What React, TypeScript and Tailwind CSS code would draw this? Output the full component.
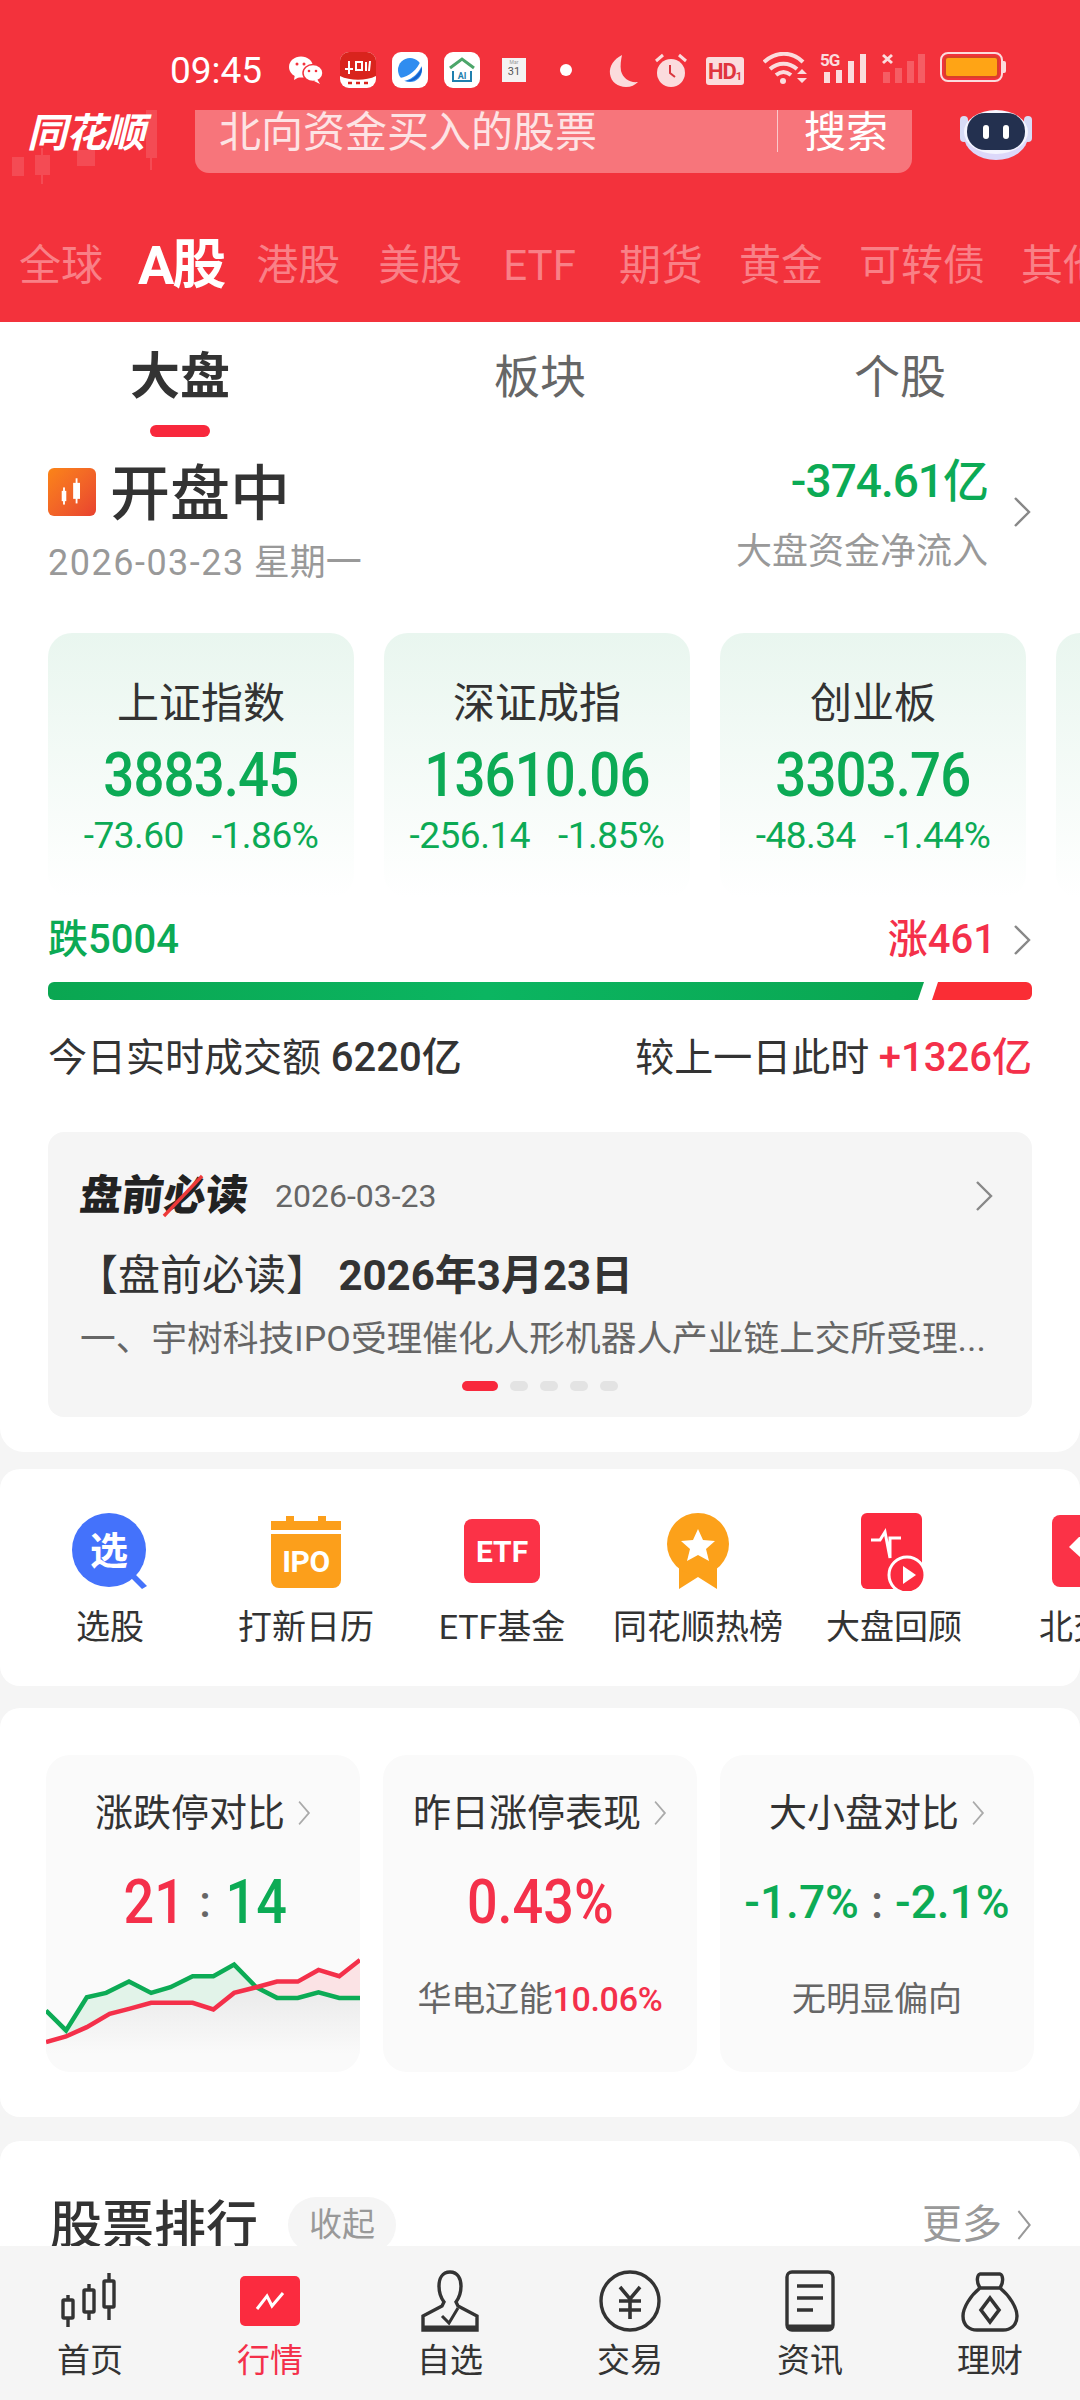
import type { ReactNode } from "react";

const FONT = "font-['Roboto','Noto_Sans_CJK_SC',sans-serif]";

const Chevron = ({ className = "" }: { className?: string }) => (
  <svg viewBox="0 0 20 32" fill="none" stroke="currentColor" strokeWidth="2.4" preserveAspectRatio="none" className={className}>
    <polyline points="3,2 17,16 3,30" />
  </svg>
);

const StatusBar = () => (
  <div className="h-[110px] shrink-0 flex items-start pt-[52px] pl-[170px]">
    <span className="text-[37px] leading-[37px] text-white w-[119px]">09:45</span>
    {/* wechat */}
    <svg viewBox="0 0 34 28" className="w-[34px] h-[28px] mt-[4px] mr-[17px]" fill="#fff">
      <ellipse cx="12" cy="11" rx="12" ry="10.5" />
      <path d="M6 18l-1 6 7-4z" />
      <ellipse cx="24" cy="17" rx="10" ry="8.5" fill="#fff" stroke="#f3323c" strokeWidth="1.5" />
      <path d="M28 23l3 5-6-3z" />
      <circle cx="8" cy="8" r="1.5" fill="#f3323c" />
      <circle cx="15" cy="8" r="1.5" fill="#f3323c" />
      <circle cx="20" cy="15" r="1.3" fill="#f3323c" />
      <circle cx="27" cy="15" r="1.3" fill="#f3323c" />
    </svg>
    {/* red app */}
    <svg viewBox="0 0 36 36" className="w-[36px] h-[36px] mr-[16px]">
      <rect width="36" height="36" rx="9" fill="#fff" />
      <path d="M0 9a9 9 0 0 1 9-9h18a9 9 0 0 1 9 9v15c-10 5-26 5-36 0z" fill="#d9241d" />
      <path d="M5 17h8M9 9v13M16 10h6v8h-6zM26 10v9M30 9l-1 10" stroke="#fff" strokeWidth="2" fill="none" />
      <path d="M8 31h4M16 31h4M24 31h4" stroke="#d9241d" strokeWidth="2.5" />
    </svg>
    {/* planet */}
    <div className="w-[36px] h-[36px] rounded-[9px] bg-white flex items-center justify-center mr-[16px]">
      <svg viewBox="0 0 30 30" className="w-[30px] h-[30px]">
        <circle cx="15" cy="15" r="12" fill="#2f8df0" />
        <path d="M5 23C14 22 23 14 26 5l2 2c-2 9-11 19-21 19z" fill="#fff" />
        <path d="M11 26c7-1 13-7 16-14 1 8-7 16-16 14z" fill="#1660c9" />
      </svg>
    </div>
    {/* ai home */}
    <div className="w-[36px] h-[36px] rounded-[9px] bg-white flex items-center justify-center mr-[22px]">
      <svg viewBox="0 0 30 30" className="w-[30px] h-[30px]" fill="none">
        <path d="M3 13 15 4l12 9" stroke="#4ca66a" strokeWidth="3" />
        <path d="M6 16v10h18V16" stroke="#1f7fae" strokeWidth="2" />
        <text x="15" y="24" textAnchor="middle" fontSize="9" fontWeight="700" fill="#1f7fae">AI</text>
      </svg>
    </div>
    {/* calendar */}
    <div className="w-[24px] h-[24px] mt-[6px] bg-[#f4f2f2] flex flex-col items-center mr-[34px]">
      <span className="text-[5px] leading-[8px] text-[#999]">Mar</span>
      <span className="text-[11px] leading-[12px] text-[#555]">31</span>
    </div>
    <span className="w-[12px] h-[12px] rounded-full bg-white mt-[12px] mr-[36px]" />
    {/* moon */}
    <svg viewBox="0 0 30 34" className="w-[30px] h-[34px] mt-[2px] mr-[17px]" fill="#fbdcdd">
      <path d="M14 1C6 5 1 12 2 20c1 8 8 13 16 13 5 0 9-2 12-5-9 1-15-4-17-11-1-6 0-11 1-16z" />
    </svg>
    {/* alarm */}
    <svg viewBox="0 0 32 34" className="w-[32px] h-[34px] mt-[1px] mr-[19px]">
      <circle cx="16" cy="20" r="14" fill="#fbdcdd" />
      <path d="M1 8 8 2M31 8l-7-6" stroke="#fbdcdd" strokeWidth="3" />
      <path d="M15 12v8l5 4" stroke="#d9363e" strokeWidth="2" fill="none" />
    </svg>
    {/* hd */}
    <div className="w-[38px] h-[28px] mt-[5px] rounded-[3px] bg-[#fbdcdd] text-[#e0353d] flex items-end justify-center mr-[19px]">
      <span className="text-[22px] leading-[26px] font-bold tracking-[-1px]">HD</span>
      <span className="text-[11px] leading-[16px] font-bold">1</span>
    </div>
    {/* wifi */}
    <svg viewBox="0 0 44 32" className="w-[44px] h-[32px] mr-[13px]" fill="none" stroke="#fbdcdd" strokeWidth="4">
      <path d="M1 10c12-11 28-11 39 0" />
      <path d="M7 17c8-7 19-7 27 0" />
      <path d="M13 23c5-4 10-4 15 0" />
      <circle cx="20" cy="29" r="3" fill="#fbdcdd" stroke="none" />
      <path d="M34 22l5-5 5 5zM34 26l5 5 5-5z" fill="#fbdcdd" stroke="none" />
    </svg>
    {/* 5g signal */}
    <div className="relative w-[48px] h-[32px] mr-[14px]">
      <span className="absolute left-0 top-0 text-[17px] leading-[17px] font-bold text-[#fbdcdd] tracking-[-1px]">5G</span>
      <svg viewBox="0 0 48 32" className="w-[48px] h-[32px]" fill="#fbdcdd">
        <rect x="4" y="20" width="6" height="11" />
        <rect x="16" y="18" width="6" height="13" />
        <rect x="28" y="9" width="6" height="22" />
        <rect x="40" y="2" width="6" height="29" />
      </svg>
    </div>
    {/* signal x */}
    <svg viewBox="0 0 44 32" className="w-[44px] h-[32px] mr-[14px]">
      <path d="M1 3l9 8M10 3l-9 8" stroke="#fbdcdd" strokeWidth="3" />
      <g fill="#fbdcdd" opacity=".25">
        <rect x="1" y="20" width="7" height="11" />
        <rect x="13" y="16" width="7" height="15" />
        <rect x="25" y="9" width="7" height="22" />
        <rect x="36" y="2" width="7" height="29" />
      </g>
    </svg>
    {/* battery */}
    <div className="flex items-center">
      <div className="w-[63px] h-[30px] rounded-[8px] border-[2px] border-[#fbdcdd] p-[2px]">
        <div className="w-full h-full rounded-[4px] bg-[#ffa415] border-[2px] border-[#d9402a]" />
      </div>
      <span className="w-[3px] h-[12px] bg-[#fbdcdd] rounded-r-[2px]" />
    </div>
  </div>
);

const SearchRow = () => (
  <div className="h-[63px] shrink-0 flex">
    <div className="relative w-[195px] shrink-0">
      <svg viewBox="0 0 170 80" className="absolute left-0 top-0 w-[170px] h-[80px]" fill="#fff" opacity=".12">
        <rect x="12" y="47" width="12" height="19" />
        <rect x="35" y="45" width="15" height="20" />
        <rect x="41" y="38" width="2" height="36" />
        <rect x="77" y="40" width="18" height="16" />
        <rect x="146" y="0" width="11" height="48" />
        <rect x="150" y="48" width="2" height="12" />
      </svg>
      <span className="relative block pl-[27px] pt-[2px] text-[40px] leading-[44px] font-bold italic text-white tracking-[-1px]">同花顺</span>
    </div>
    <div className="w-[717px] h-full bg-[#f7757b] rounded-b-[14px] flex items-start pl-[24px]">
      <span className="text-[42px] leading-[46px] text-[#fde3e4] w-[558px] h-[44px]">北向资金买入的股票</span>
      <span className="w-[1px] h-[42px] bg-[#fbc9cb] mr-[26px]" />
      <span className="text-[42px] leading-[46px] text-white">搜索</span>
    </div>
    <svg viewBox="0 0 72 50" className="ml-[48px] w-[72px] h-[50px]">
      <rect x="0" y="6" width="8" height="26" rx="4" fill="#d8dcf6" />
      <rect x="64" y="6" width="8" height="26" rx="4" fill="#d8dcf6" />
      <ellipse cx="36" cy="26" rx="32" ry="24" fill="#dcd8fa" />
      <ellipse cx="36" cy="22" rx="32" ry="22" fill="#f4f5ff" />
      <rect x="7" y="3" width="58" height="37" rx="18" fill="#23304f" />
      <rect x="23" y="15" width="6" height="14" rx="3" fill="#fff" />
      <rect x="43" y="15" width="6" height="14" rx="3" fill="#fff" />
    </svg>
  </div>
);

const marketTabs = [
  { label: "港股", cls: "" },
  { label: "美股", cls: "ml-[2px]" },
  { label: "ETF", cls: "ml-[5px] mr-[7px]" },
  { label: "期货", cls: "" },
  { label: "黄金", cls: "" },
  { label: "可转债", cls: "" },
  { label: "其他", cls: "" },
];

const MarketTabs = () => (
  <div className="h-[149px] shrink-0 flex items-center gap-[36px] pl-[19px] pt-[36px] overflow-hidden whitespace-nowrap">
    <span className="text-[42px] text-[#f98087]">全球</span>
    <span className="text-[54px] font-bold text-white -ml-[1px] -mr-[4px] tracking-[-2px]">A股</span>
    {marketTabs.map((t) => (
      <span key={t.label} className={`text-[42px] text-[#f98087] ${t.cls}`}>{t.label}</span>
    ))}
  </div>
);

const indices = [
  { name: "上证指数", value: "3883.45", a: "-73.60", b: "-1.86%" },
  { name: "深证成指", value: "13610.06", a: "-256.14", b: "-1.85%" },
  { name: "创业板", value: "3303.76", a: "-48.34", b: "-1.44%" },
];

const IndexCards = () => (
  <div className="flex gap-[30px] mt-[36px] pl-[48px] overflow-hidden">
    {indices.map((c) => (
      <div key={c.name} className="w-[306px] h-[265px] shrink-0 rounded-[24px] bg-linear-to-b from-[#e9f6ef] to-white flex flex-col items-center pt-[43px]">
        <span className="text-[42px] leading-[56px] text-[#333]">{c.name}</span>
        <span className="inline-block scale-x-[0.88] text-[62px] leading-[64px] mt-[11px] font-medium text-[#0caa55] tracking-[-1px]">{c.value}</span>
        <span className="text-[37px] leading-[40px] mt-[9px] text-[#0caa55] flex gap-[28px] whitespace-nowrap tracking-[-0.5px]">
          <span>{c.a}</span>
          <span>{c.b}</span>
        </span>
      </div>
    ))}
    <div className="w-[306px] h-[265px] shrink-0 rounded-[24px] bg-linear-to-b from-[#e9f6ef] to-white" />
  </div>
);

const Overview = () => (
  <section className="bg-white rounded-b-[24px] h-[1130px] shrink-0 overflow-hidden">
    <div className="flex h-[115px] pt-[27px]">
      <div className="w-[360px] flex flex-col items-center">
        <span className="text-[50px] leading-[56px] font-bold text-[#333]">大盘</span>
        <span className="w-[60px] h-[12px] mt-[20px] rounded-full bg-[#f8283c]" />
      </div>
      <div className="w-[360px] text-center text-[46px] leading-[56px] text-[#666]">板块</div>
      <div className="w-[360px] text-center text-[46px] leading-[56px] text-[#666]">个股</div>
    </div>
    <div className="flex justify-between px-[48px] h-[160px]">
      <div className="pt-[27px]">
        <div className="flex items-center h-[62px]">
          <span className="w-[48px] h-[48px] -mt-[6px] rounded-[6px] bg-linear-to-br from-[#fb8416] to-[#e8412f] flex items-center justify-center">
            <svg viewBox="0 0 28 28" className="w-[32px] h-[32px]" fill="#fff">
              <rect x="5" y="13" width="4" height="9" />
              <rect x="6.2" y="10" width="1.6" height="15" />
              <rect x="15" y="6" width="6" height="14" />
              <rect x="17.2" y="2" width="1.6" height="22" />
            </svg>
          </span>
          <span className="text-[60px] leading-[62px] ml-[14px] text-[#333] font-medium">开盘中</span>
        </div>
        <div className="text-[36px] leading-[40px] mt-[17px] text-[#999] whitespace-nowrap">
          <span className="tracking-[1.5px]">2026-03-23</span> 星期一
        </div>
      </div>
      <div className="flex items-start">
        <div className="text-right pt-[19px]">
          <div className="text-[46px] leading-[50px] font-medium text-[#0caa55] tracking-[-1px]">-374.61亿</div>
          <div className="text-[36px] leading-[40px] mt-[26px] text-[#999]">大盘资金净流入</div>
        </div>
        <Chevron className="w-[20px] h-[32px] ml-[24px] mt-[59px] text-[#888]" />
      </div>
    </div>
    <IndexCards />
    <div className="flex justify-between items-center px-[48px] h-[44px] mt-[20px]">
      <span className="text-[40px] font-medium text-[#0caa55]">跌5004</span>
      <span className="flex items-center text-[40px] font-medium text-[#f4304a]">
        涨461
        <Chevron className="w-[20px] h-[32px] ml-[16px] text-[#888]" />
      </span>
    </div>
    <div className="flex mx-[48px] h-[18px] mt-[20px] gap-[8px] overflow-hidden rounded-[6px]">
      <div className="flex-1 bg-linear-to-r from-[#0aa651] via-[#0bb561] to-[#0aa651] [clip-path:polygon(0_0,100%_0,99.3%_100%,0_100%)]" />
      <div className="w-[100px] bg-[#fa2d35] [clip-path:polygon(6%_0,100%_0,100%_100%,0_100%)]" />
    </div>
    <div className="flex justify-between items-center px-[48px] h-[50px] mt-[33px] text-[39px]">
      <span className="text-[#333]">今日实时成交额 <span className="font-medium text-[40px]">6220亿</span></span>
      <span className="text-[#333]">较上一日此时 <span className="font-medium text-[40px] text-[#f4304a]">+1326亿</span></span>
    </div>
    <ReadCard />
  </section>
);

const dots = [0, 1, 2, 3];

const ReadCard = () => (
  <div className="mx-[48px] mt-[49px] h-[285px] rounded-[16px] bg-[#f5f5f5] px-[32px] pt-[40px] flex flex-col">
    <div className="flex items-center h-[48px]">
      <span className="relative text-[42px] leading-[48px] font-black text-[#222] -skew-x-6">
        盘前必读
        <svg viewBox="0 0 40 46" className="absolute left-[84px] top-0 w-[40px] h-[46px]" fill="none" stroke="#ee3a3a" strokeWidth="3.5">
          <path d="M2 44 36 4" />
        </svg>
      </span>
      <span className="ml-[27px] text-[32px] text-[#666]">2026-03-23</span>
      <Chevron className="w-[20px] h-[32px] ml-auto mr-[6px] text-[#888]" />
    </div>
    <div className="mt-[31px] text-[42px] leading-[50px] text-[#333] -ml-[4px] whitespace-nowrap">
      【盘前必读】 <span className="font-bold">2026年3月23日</span>
    </div>
    <div className="mt-[15px] text-[35.7px] leading-[46px] text-[#666] whitespace-nowrap">一、宇树科技IPO受理催化人形机器人产业链上交所受理...</div>
    <div className="flex justify-center gap-[12px] mt-[19px]">
      <span className="w-[36px] h-[10px] rounded-full bg-[#f8283c]" />
      {dots.map((d) => (
        <span key={d} className="w-[18px] h-[10px] rounded-full bg-[#e3e3e3]" />
      ))}
    </div>
  </div>
);

const tools: { label: string; icon: ReactNode }[] = [
  {
    label: "选股",
    icon: (
      <div className="relative w-[76px] h-[76px]">
        <svg viewBox="0 0 76 76" className="absolute inset-0"><circle cx="37" cy="37" r="37" fill="#4472fb" /><path d="M60 58l15 15-5 3-14-14z" fill="#4472fb" /></svg>
        <span className="absolute inset-0 flex items-center justify-center text-[38px] font-bold text-white pr-[2px]">选</span>
      </div>
    ),
  },
  {
    label: "打新日历",
    icon: (
      <div className="w-[70px] h-[72px] flex flex-col mt-[3px]">
        <svg viewBox="0 0 70 14" className="w-[70px] h-[14px]" fill="#fc9f1b"><rect x="0" y="5" width="70" height="9" /><rect x="15" y="0" width="8" height="8" /><rect x="47" y="0" width="8" height="8" /></svg>
        <div className="mt-[4px] flex-1 bg-[#fc9f1b] rounded-b-[8px] flex items-center justify-center text-[30px] font-bold text-white tracking-[-0.5px]">IPO</div>
      </div>
    ),
  },
  {
    label: "ETF基金",
    icon: (
      <div className="w-[76px] h-[64px] mt-[6px] rounded-[8px] bg-[#fb3247] flex items-center justify-center text-[30px] font-bold text-white">ETF</div>
    ),
  },
  {
    label: "同花顺热榜",
    icon: (
      <svg viewBox="0 0 62 76" className="w-[62px] h-[76px]">
        <path d="M12 50h38v26L31 64 12 76z" fill="#fca11a" />
        <circle cx="31" cy="31" r="31" fill="#fca11a" />
        <path d="M31 16l5 11 12 1-9 8 3 12-11-6-11 6 3-12-9-8 12-1z" fill="#fff" />
      </svg>
    ),
  },
  {
    label: "大盘回顾",
    icon: (
      <svg viewBox="0 0 66 78" className="w-[66px] h-[78px]">
        <rect x="0" y="0" width="61" height="76" rx="6" fill="#fb2b3f" />
        <path d="M10 35h9l5-8 5 26 0-20h11" fill="none" stroke="#fff" strokeWidth="3" transform="translate(0 -8)" />
        <circle cx="46" cy="62" r="18" fill="#fb2b3f" stroke="#fff" strokeWidth="3" />
        <path d="M42 53l13 9-13 9z" fill="#fff" />
      </svg>
    ),
  },
  {
    label: "北交所",
    icon: (
      <div className="w-[76px] h-[72px] mt-[2px] rounded-[8px] bg-[#fb3247] flex items-center pl-[17px]">
        <svg viewBox="0 0 40 28" className="w-[40px] h-[28px]" fill="#fff">
          <path d="M10 0h20l10 10-20 18L0 10z" />
        </svg>
      </div>
    ),
  },
];

const ToolsCard = () => (
  <section className="mt-[17px] h-[217px] shrink-0 rounded-[20px] bg-white flex pl-[12px] pt-[44px] overflow-hidden">
    {tools.map((t) => (
      <div key={t.label} className="w-[196px] shrink-0 flex flex-col items-center">
        <div className="h-[78px]">{t.icon}</div>
        <span className="mt-[14px] text-[34px] leading-[44px] text-[#333] whitespace-nowrap">{t.label}</span>
      </div>
    ))}
  </section>
);

const Spark = () => (
  <svg viewBox="68 760 454 355" preserveAspectRatio="none" className="w-full h-[118px] mt-auto shrink-0">
    <defs>
      <linearGradient id="under" x1="0" y1="0" x2="0" y2="1">
        <stop offset="0" stopColor="#e3e3e3" />
        <stop offset="1" stopColor="#fafafa" />
      </linearGradient>
    </defs>
    <polygon points="68,1025 97,1008 127,980 160,940 188,925 220,907 280,907 310,927 340,877 372,860 402,843 432,843 462,808 492,827 522,778 522,1060 68,1060" fill="url(#under)" />
    <polygon points="68,930 97,990 127,890 155,877 188,843 220,877 248,860 280,827 310,827 340,792 372,860 340,877 310,927 280,907 220,907 188,925 160,940 127,980 97,1008" fill="#e2f3e9" />
    <polygon points="372,860 402,892 432,892 462,875 492,892 522,892 522,778 492,827 462,808 432,843 402,843" fill="#fbe3e5" />
    <polyline points="68,930 97,990 127,890 155,877 188,843 220,877 248,860 280,827 310,827 340,792 372,860 402,892 432,892 462,875 492,892 522,892" fill="none" stroke="#0cab55" strokeWidth="4.5" vectorEffect="non-scaling-stroke" />
    <polyline points="68,1025 97,1008 127,980 160,940 188,925 220,907 280,907 310,927 340,877 372,860 402,843 432,843 462,808 492,827 522,778" fill="none" stroke="#f4304a" strokeWidth="4.5" vectorEffect="non-scaling-stroke" />
  </svg>
);

const StatTitle = ({ children }: { children: ReactNode }) => (
  <div className="flex items-center justify-center h-[48px] text-[38px] leading-[48px] text-[#333] whitespace-nowrap">
    {children}
    <Chevron className="w-[14px] h-[26px] ml-[12px] text-[#aaa]" />
  </div>
);

const StatsCard = () => (
  <section className="mt-[22px] h-[409px] shrink-0 rounded-[20px] bg-white flex gap-[23px] pl-[46px] pt-[47px]">
    <div className="w-[314px] h-[317px] rounded-[24px] bg-[#fafafa] overflow-hidden flex flex-col pt-[34px]">
      <StatTitle>涨跌停对比</StatTitle>
      <div className="mt-[33px] flex justify-center items-center text-[62px] leading-[64px] font-medium gap-[10px] pl-[4px]">
        <span className="inline-block scale-x-[0.87] text-[#f4304a]">21</span>
        <span className="text-[#666] text-[44px] leading-[56px]">:</span>
        <span className="inline-block scale-x-[0.87] text-[#0cab55]">14</span>
      </div>
      <Spark />
    </div>
    <div className="w-[314px] h-[317px] rounded-[24px] bg-[#fafafa] flex flex-col items-center pt-[34px]">
      <StatTitle>昨日涨停表现</StatTitle>
      <div className="mt-[33px] inline-block scale-x-[0.87] text-[62px] leading-[64px] font-medium text-[#f4304a]">0.43%</div>
      <div className="mt-[43px] text-[34px] leading-[44px] text-[#666] whitespace-nowrap tracking-[-0.3px]">
        华电辽能<span className="text-[#f4304a] font-medium">10.06%</span>
      </div>
    </div>
    <div className="w-[314px] h-[317px] rounded-[24px] bg-[#fafafa] flex flex-col items-center pt-[34px]">
      <StatTitle>大小盘对比</StatTitle>
      <div className="mt-[33px] flex items-center text-[46px] leading-[64px] font-medium text-[#0cab55] gap-[12px] whitespace-nowrap">
        -1.7%<span className="text-[#666]">:</span>-2.1%
      </div>
      <div className="mt-[43px] text-[34px] leading-[44px] text-[#666]">无明显偏向</div>
    </div>
  </section>
);

const RankCard = () => (
  <section className="mt-[24px] flex-1 rounded-t-[20px] bg-white flex items-start pl-[50px] pr-[48px] pt-[56px]">
    <span className="text-[52px] leading-[60px] font-medium text-[#333] whitespace-nowrap">股票排行</span>
    <span className="ml-[30px] w-[108px] h-[56px] rounded-full bg-[#f5f5f5] text-[33px] leading-[56px] text-center text-[#999]">收起</span>
    <span className="ml-auto mt-[3px] flex items-center text-[40px] leading-[50px] text-[#999]">
      更多
      <Chevron className="w-[16px] h-[32px] ml-[14px] text-[#999]" />
    </span>
  </section>
);

const S = "#333";

const navItems: { label: string; active?: boolean; icon: ReactNode }[] = [
  {
    label: "首页",
    icon: (
      <svg viewBox="0 0 60 62" fill="none" stroke={S} strokeWidth="3.4" className="w-[60px] h-[62px]">
        <rect x="3" y="30" width="10" height="18" rx="1" /><path d="M8 25v5M8 48v9" />
        <rect x="24" y="20" width="10" height="22" rx="1" /><path d="M29 14v6M29 42v8" />
        <rect x="44" y="11" width="10" height="26" rx="1" /><path d="M49 3v8M49 37v13" />
      </svg>
    ),
  },
  {
    label: "行情",
    active: true,
    icon: (
      <div className="w-[60px] h-[50px] mt-[6px] rounded-[5px] bg-[#fb2b3f] flex items-center justify-center">
        <svg viewBox="0 0 30 20" fill="none" stroke="#fff" strokeWidth="3" className="w-[30px] h-[20px]">
          <path d="M2 18 12 5l5 10L28 2" />
        </svg>
      </div>
    ),
  },
  {
    label: "自选",
    icon: (
      <svg viewBox="0 0 60 62" fill="none" stroke={S} strokeWidth="3.4" className="w-[60px] h-[62px]">
        <path d="M30 2c-8 0-11 7-11 14 0 7 2 12 5 16l-2 4L3 46v14h54V46l-19-10-2-4c3-4 5-9 5-16 0-7-3-14-11-14z" />
        <path d="M22 46l7 7 9-15" strokeWidth="3" />
        <path d="M3 58h54" strokeWidth="5" />
      </svg>
    ),
  },
  {
    label: "交易",
    icon: (
      <svg viewBox="0 0 62 62" fill="none" stroke={S} strokeWidth="3.4" className="w-[62px] h-[62px]">
        <circle cx="31" cy="31" r="29" />
        <path d="M21 17l10 12 10-12M20 31h22M20 40h22M31 29v20" strokeWidth="3.6" />
      </svg>
    ),
  },
  {
    label: "资讯",
    icon: (
      <svg viewBox="0 0 50 62" fill="none" stroke={S} strokeWidth="3.4" className="w-[50px] h-[62px]">
        <rect x="2" y="2" width="46" height="58" rx="5" />
        <path d="M2 57h46" strokeWidth="5" />
        <path d="M12 16h26M12 28h26M12 40h16" strokeWidth="3.6" />
      </svg>
    ),
  },
  {
    label: "理财",
    icon: (
      <svg viewBox="0 0 58 62" fill="none" stroke={S} strokeWidth="3.4" className="w-[58px] h-[62px]">
        <path d="M19 18c-4-6-3-13 0-14h20c3 1 4 8 0 14" />
        <path d="M19 18h20c10 8 17 20 17 28 0 10-7 14-14 14H16C9 60 2 56 2 46c0-8 7-20 17-28z" />
        <path d="M29 28l9 12-9 12-9-12z" strokeWidth="3.6" />
      </svg>
    ),
  },
];

const BottomNav = () => (
  <nav className="h-[154px] shrink-0 bg-[#f5f5f5] flex pt-[24px]">
    {navItems.map((n) => (
      <div key={n.label} className="w-[180px] flex flex-col items-center">
        <div className="h-[64px] flex items-start">{n.icon}</div>
        <span className={`mt-[5px] text-[33px] leading-[44px] ${n.active ? "text-[#f4304a]" : "text-[#333]"}`}>{n.label}</span>
      </div>
    ))}
  </nav>
);

const App = () => (
  <div className={`w-[1080px] h-[2400px] bg-[#f5f5f5] flex flex-col overflow-hidden ${FONT}`}>
    <header className="h-[322px] shrink-0 bg-[#f3323c] flex flex-col">
      <StatusBar />
      <SearchRow />
      <MarketTabs />
    </header>
    <main className="flex-1 min-h-0 flex flex-col overflow-hidden">
      <Overview />
      <ToolsCard />
      <StatsCard />
      <RankCard />
    </main>
    <BottomNav />
  </div>
);

export default App;
